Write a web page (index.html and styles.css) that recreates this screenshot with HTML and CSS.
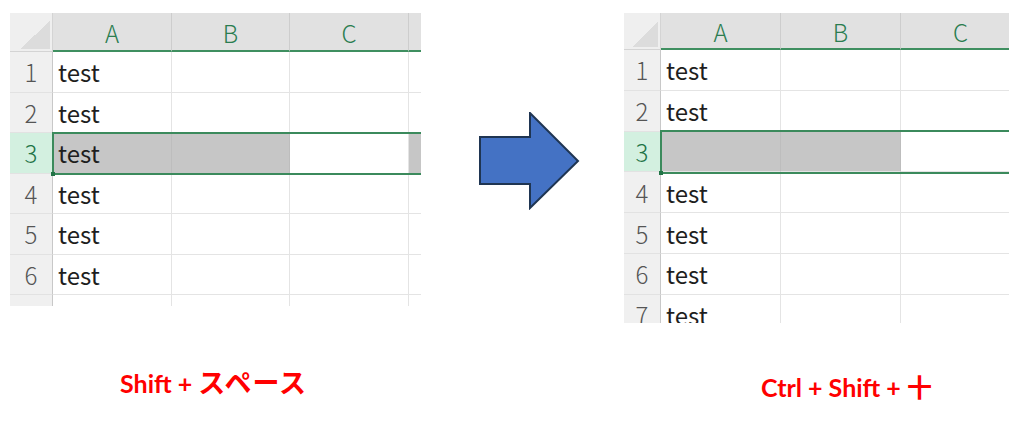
FILE: index.html
```html
<!DOCTYPE html>
<html lang="ja">
<head>
<meta charset="utf-8">
<link rel="stylesheet" href="styles.css">
</head>
<body>
<div class="page">
  <div class="panel panel-left">
    <div class="sheet sheet-left">
      <div class="corner"></div>
      <div class="ch">A</div><div class="ch">B</div><div class="ch">C</div><div class="ch"></div>
      <div class="rh">1</div><div class="c">test</div><div class="c"></div><div class="c"></div><div class="c"></div>
      <div class="rh">2</div><div class="c">test</div><div class="c"></div><div class="c"></div><div class="c"></div>
      <div class="rh rh-sel">3</div><div class="c gray">test</div><div class="c gray"></div><div class="c"></div><div class="c gray"></div>
      <div class="rh">4</div><div class="c">test</div><div class="c"></div><div class="c"></div><div class="c"></div>
      <div class="rh">5</div><div class="c">test</div><div class="c"></div><div class="c"></div><div class="c"></div>
      <div class="rh">6</div><div class="c">test</div><div class="c"></div><div class="c"></div><div class="c"></div>
      <div class="rh">7</div><div class="c">test</div><div class="c"></div><div class="c"></div><div class="c"></div>
      <div class="sel sel-left"><span class="handle"></span></div>
    </div>
    <div class="label label-left">Shift + <span class="jp">スペース</span></div>
  </div>

  <div class="arrow">
    <svg width="102" height="98" viewBox="0 0 102 98">
      <polygon points="1,25 51,25 51,1 99,49 51,96 51,72 1,72" fill="#4472c4" stroke="#1f3552" stroke-width="2" stroke-linejoin="miter"/>
    </svg>
  </div>

  <div class="panel panel-right">
    <div class="sheet sheet-right">
      <div class="corner"></div>
      <div class="ch">A</div><div class="ch">B</div><div class="ch">C</div>
      <div class="rh">1</div><div class="c">test</div><div class="c"></div><div class="c"></div>
      <div class="rh">2</div><div class="c">test</div><div class="c"></div><div class="c"></div>
      <div class="rh rh-sel">3</div><div class="c gray"></div><div class="c gray"></div><div class="c"></div>
      <div class="rh">4</div><div class="c">test</div><div class="c"></div><div class="c"></div>
      <div class="rh">5</div><div class="c">test</div><div class="c"></div><div class="c"></div>
      <div class="rh">6</div><div class="c">test</div><div class="c"></div><div class="c"></div>
      <div class="rh">7</div><div class="c">test</div><div class="c"></div><div class="c"></div>
      <div class="sel sel-right"><span class="handle"></span></div>
    </div>
    <div class="label label-right">Ctrl + Shift + 十</div>
  </div>
</div>
</body>
</html>
```

FILE: styles.css
```css
html, body {
  margin: 0;
  padding: 0;
  background: #ffffff;
}

body {
  width: 1024px;
  height: 440px;
  overflow: hidden;
  font-family: "Noto Sans CJK JP", "Noto Sans", sans-serif;
}

.page {
  display: flex;
  align-items: flex-start;
  padding: 13px 0 0 10px;
}

.panel {
  display: flex;
  flex-direction: column;
}

.sheet {
  display: grid;
  position: relative;
  overflow: hidden;
  background: #ffffff;
}

.sheet-left {
  width: 411px;
  height: 293px;
  grid-template-columns: 43px 119px 118px 119px 119px;
  grid-template-rows: 39px repeat(7, 40.5px);
}

.sheet-right {
  width: 385px;
  height: 310px;
  grid-template-columns: 37px 120px 120px 120px;
  grid-template-rows: 37px repeat(7, 40.8px);
}

.corner {
  position: relative;
  background: #efefef;
  border-right: 1px solid #d4d4d4;
  border-bottom: 1px solid #d4d4d4;
  box-sizing: border-box;
}

.corner::after {
  content: "";
  position: absolute;
  right: 2px;
  bottom: 2px;
  width: 30px;
  height: 28px;
  background: linear-gradient(to bottom right, transparent 50%, #dcdcdc 50%);
}

.sheet-right .corner::after {
  width: 26px;
  height: 26px;
}

.ch {
  display: flex;
  align-items: center;
  justify-content: center;
  background: #e1e1e1;
  color: #2b7d50;
  font-size: 24px;
  font-weight: 300;
  border-right: 1px solid #cdcdcd;
  border-bottom: 2px solid #3f8f60;
  box-sizing: border-box;
  padding-top: 2px;
}

.rh {
  display: flex;
  align-items: center;
  justify-content: center;
  background: #f0f0f0;
  color: #555555;
  font-size: 24px;
  font-weight: 300;
  border-right: 1px solid #c8c8c8;
  border-bottom: 1px solid #e2e2e2;
  box-sizing: border-box;
}

.rh-sel {
  background: #d3f0e0;
  color: #217346;
}

.c {
  display: flex;
  align-items: center;
  padding-left: 5px;
  color: #1e1e1e;
  font-size: 24px;
  border-right: 1px solid #e4e4e4;
  border-bottom: 1px solid #e4e4e4;
  box-sizing: border-box;
}

.gray {
  background: #c6c6c6;
  border-right-color: #bdbdbd;
}

.sel {
  position: absolute;
  border: 2px solid #3b8a5c;
  box-sizing: border-box;
}

.sel-left {
  left: 42px;
  top: 119px;
  width: 420px;
  height: 43px;
}

.sel-right {
  left: 36px;
  top: 117px;
  width: 400px;
  height: 44px;
}

.handle {
  position: absolute;
  left: -3px;
  bottom: -3px;
  width: 4px;
  height: 4px;
  background: #217346;
}

.arrow {
  margin-left: 58px;
  margin-top: 99px;
  line-height: 0;
}

.panel-right {
  margin-left: 43px;
}

.label {
  color: #ff0000;
  font-family: "Lato", "Noto Sans CJK JP", sans-serif;
  font-weight: 700;
  font-size: 25px;
  line-height: 30px;
  white-space: nowrap;
}

.jp {
  font-size: 27px;
  letter-spacing: 1px;
}

.label-left {
  margin-top: 62px;
  padding-left: 110px;
}

.label-right {
  margin-top: 49px;
  padding-left: 137px;
}
```
